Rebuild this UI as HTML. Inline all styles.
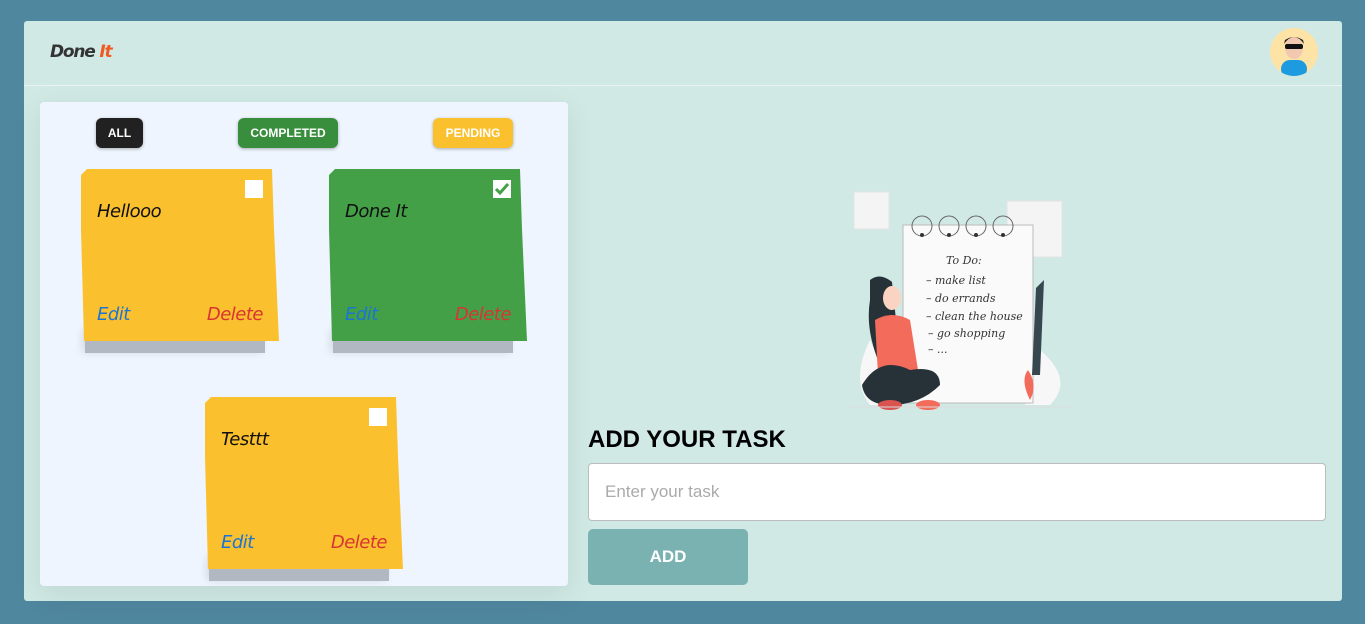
<!DOCTYPE html>
<html><head><meta charset="utf-8"><style>
*{margin:0;padding:0;box-sizing:border-box}
body{width:1365px;height:624px;background:#4f879e;font-family:"Liberation Sans",sans-serif;position:relative;overflow:hidden}
.wrap{position:absolute;left:24px;top:21px;width:1318px;height:580px;background:#d0e9e5;border-radius:3px}
.hdr{position:absolute;left:0;top:0;width:100%;height:65px;border-bottom:1px solid #eaf5f3}
.logo{position:absolute;left:26px;top:21px;font:bold italic 17px "DejaVu Sans",sans-serif;color:#333;letter-spacing:-1.2px}
.logo span{color:#f05a22}
.av{position:absolute;left:1246px;top:7px;width:48px;height:48px;border-radius:50%;background:#fde3a6;overflow:hidden}
.panel{position:absolute;left:16px;top:81px;width:528px;height:484px;background:#eef5fe;border-radius:4px;box-shadow:0 8px 30px rgba(0,0,0,.08)}
.btn{position:absolute;top:16px;height:30px;border-radius:6px;color:#fff;font-weight:bold;font-size:12px;line-height:30px;text-align:center;box-shadow:0 1px 3px rgba(0,0,0,.3)}
.note{position:absolute;width:198px;height:184px}
.note .sh{position:absolute;left:4px;top:160px;width:180px;height:24px;background:#b1b8c1;box-shadow:-3px 0 8px rgba(0,0,0,.1)}
.note .bd{position:absolute;left:0;top:0;width:198px;height:172px;clip-path:polygon(0 6px,6px 0,191px 0,193px 60px,198px 172px,3px 172px,0 60px);font-family:"DejaVu Sans",sans-serif;font-style:italic}
.note .t{position:absolute;left:16px;top:32px;font-size:18px;color:#111;letter-spacing:-.5px}
.note .cb{position:absolute;left:164px;top:11px;width:18px;height:18px;background:#fff}
.note .e{position:absolute;left:16px;top:135px;font-size:18px;color:#1e74d2;letter-spacing:-.5px}
.note .d{position:absolute;right:16px;top:135px;font-size:18px;color:#d93434;letter-spacing:-.5px}
h2{position:absolute;left:564px;top:405px;font-size:24px;font-weight:bold;color:#000}
.inp{position:absolute;left:564px;top:442px;width:738px;height:58px;background:#fff;border:1px solid #bcbcbc;border-radius:4px;color:#aaa;font-size:17px;line-height:56px;padding-left:16px}
.add{position:absolute;left:564px;top:508px;width:160px;height:56px;background:#7ab2b2;border-radius:5px;color:#fff;font-weight:bold;font-size:17px;line-height:56px;text-align:center}
</style></head><body>
<div class="wrap">
 <div class="hdr">
  <div class="logo">Done <span>It</span></div>
  <div class="av"><svg width="48" height="48" viewBox="0 0 48 48">
   <rect x="11" y="32" width="26" height="18" rx="9" fill="#1e9be0"/>
   <ellipse cx="24" cy="20" rx="9" ry="11" fill="#f0c9b0"/>
   <path d="M14 16 Q24 2 34 16 L33 12 Q24 6 15 12Z" fill="#222"/>
   <rect x="15" y="16" width="18" height="5" rx="2" fill="#111"/>
  </svg></div>
 </div>
 <div class="panel">
  <div class="btn" style="left:56px;width:47px;background:#212121">ALL</div>
  <div class="btn" style="left:198px;width:100px;background:#388e3c">COMPLETED</div>
  <div class="btn" style="left:393px;width:80px;background:#fbc02d">PENDING</div>
  <div class="note" style="left:41px;top:67px"><div class="sh"></div><div class="bd" style="background:#fbc02d"><div class="t">Hellooo</div><div class="cb"></div><div class="e">Edit</div><div class="d">Delete</div></div></div>
  <div class="note" style="left:289px;top:67px"><div class="sh"></div><div class="bd" style="background:#43a047"><div class="t">Done It</div><div class="cb"><svg width="18" height="18"><path d="M3 9 L7 13 L15 4" stroke="#43a047" stroke-width="3" fill="none"/></svg></div><div class="e">Edit</div><div class="d">Delete</div></div></div>
  <div class="note" style="left:165px;top:295px"><div class="sh"></div><div class="bd" style="background:#fbc02d"><div class="t">Testtt</div><div class="cb"></div><div class="e">Edit</div><div class="d">Delete</div></div></div>
 </div>
 <svg style="position:absolute;left:816px;top:159px" width="240" height="240" viewBox="0 0 240 240">
  <rect x="14" y="12" width="35" height="37" fill="#f4f4f4" stroke="#e4e4e4"/>
  <rect x="167" y="21" width="55" height="56" fill="#f4f4f4" stroke="#e4e4e4"/>
  <path d="M30 160 Q10 200 30 225 L60 225Z M200 170 Q235 200 210 225 L185 225Z" fill="#f7f7f7"/>
  <rect x="63" y="45" width="130" height="178" fill="#fafafa" stroke="#bbb"/>
  <g fill="none" stroke="#666"><circle cx="82" cy="46" r="10"/><circle cx="109" cy="46" r="10"/><circle cx="136" cy="46" r="10"/><circle cx="163" cy="46" r="10"/></g>
  <g fill="#333"><circle cx="82" cy="55" r="2"/><circle cx="109" cy="55" r="2"/><circle cx="136" cy="55" r="2"/><circle cx="163" cy="55" r="2"/></g>
  <g font-family="DejaVu Serif" font-style="italic" font-size="11" fill="#333"><text x="106" y="84">To Do:</text><text x="86" y="104">– make list</text><text x="86" y="122">– do errands</text><text x="86" y="140">– clean the house</text><text x="88" y="157">– go shopping</text><text x="88" y="173">– ...</text></g>
  <path d="M196 108 L204 100 L200 195 L192 195Z" fill="#37474f"/>
  <path d="M30 100 Q40 92 52 102 L56 140 Q70 160 60 180 L40 185 Q25 150 30 120Z" fill="#263238"/>
  <ellipse cx="52" cy="118" rx="9" ry="12" fill="#fbd3c2"/>
  <path d="M35 140 Q52 130 70 140 L78 190 L38 195Z" fill="#f26b5b"/>
  <path d="M22 205 Q40 175 70 190 Q100 185 100 205 Q80 225 50 225 Q25 225 22 205Z" fill="#263238"/>
  <ellipse cx="50" cy="225" rx="12" ry="5" fill="#d9534f"/><ellipse cx="88" cy="225" rx="12" ry="5" fill="#f26b5b"/>
  <path d="M190 220 Q180 200 188 190 Q198 205 190 220Z" fill="#f26b5b"/>
  <line x1="10" y1="227" x2="230" y2="227" stroke="#ddd"/>
 </svg>
 <h2>ADD YOUR TASK</h2>
 <div class="inp">Enter your task</div>
 <div class="add">ADD</div>
</div>
</body></html>
